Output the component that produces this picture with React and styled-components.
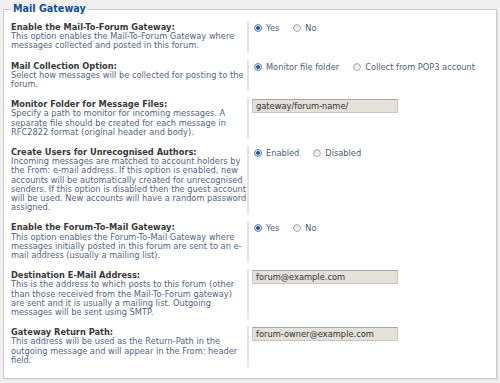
import React, { useState } from 'react'
import styled, { createGlobalStyle } from 'styled-components'

const GlobalStyle = createGlobalStyle`
    html, body {
        margin: 0;
        padding: 0;
        background: #efefef;
    }
    body {
        font-family: "DejaVu Sans", Verdana, sans-serif;
        font-size: 8.25px;
    }
`

const Page = styled.div`
    padding: 3px 3px 6px 3px;
    width: 494px;
`

const Fieldset = styled.fieldset`
    margin: 0;
    padding: 6px 6px 6px 7px;
    border: 1px solid #cdcdcd;
    background: #fff;
    box-shadow: 1px 1px 0 #e2e2e2;
`

const Legend = styled.legend`
    margin-left: 1px;
    padding: 0 1px;
    font-size: 9.6px;
    font-weight: bold;
    line-height: 12px;
    color: #115098;
`

const Row = styled.dl`
    display: flex;
    margin: 0 0 7px 0;
    &:last-child {
        margin-bottom: 5px;
    }
`

const Label = styled.dt`
    width: 236px;
    flex: none;
    margin: 0;
    padding: 2px 0;
    line-height: 9.2px;
`

const Title = styled.div`
    font-weight: bold;
    color: #383838;
`

const Explain = styled.div`
    color: #536482;
`

const Field = styled.dd`
    flex: 1;
    margin: 0;
    padding: 2px 0 0 3px;
    border-left: 2px solid #e3e3e3;
    display: flex;
    align-items: flex-start;
    gap: 12px;
`

const Option = styled.label`
    display: flex;
    align-items: center;
    gap: 4px;
    color: #4c5d77;
    line-height: 10px;
    padding-left: 2px;
`

const Radio = styled.span`
    width: 8px;
    height: 8px;
    box-sizing: border-box;
    border-radius: 50%;
    border: 1px solid ${p => (p.$on ? '#6d7f96' : '#a8adb3')};
    background: ${p => (p.$on
        ? 'radial-gradient(circle, #1a64b0 0 1.7px, #e8eef4 2.2px)'
        : 'linear-gradient(#e4e4e4, #fafafa)')};
    box-shadow: inset 0 0 1px rgba(0, 0, 0, 0.15);
`

const TextInput = styled.input`
    width: 146px;
    height: 14px;
    box-sizing: border-box;
    margin: -1px 0 0 0;
    padding: 0 3px;
    border: 1px solid #c9c5be;
    border-top-color: #aaa69f;
    background: #e4e0da;
    font-family: "DejaVu Sans", Verdana, sans-serif;
    font-size: 8.3px;
    color: #333;
    outline: none;
`

const settings = [
    {
        title: 'Enable the Mail-To-Forum Gateway:',
        explain: 'This option enables the Mail-To-Forum Gateway where messages collected and posted in this forum.',
        options: ['Yes', 'No'],
    },
    {
        title: 'Mail Collection Option:',
        explain: 'Select how messages will be collected for posting to the forum.',
        options: ['Monitor file folder', 'Collect from POP3 account'],
    },
    {
        title: 'Monitor Folder for Message Files:',
        explain: 'Specify a path to monitor for incoming messages. A separate file should be created for each message in RFC2822 format (original header and body).',
        value: 'gateway/forum-name/',
    },
    {
        title: 'Create Users for Unrecognised Authors:',
        explain: 'Incoming messages are matched to account holders by the From: e-mail address. If this option is enabled, new accounts will be automatically created for unrecognised senders. If this option is disabled then the guest account will be used. New accounts will have a random password assigned.',
        options: ['Enabled', 'Disabled'],
    },
    {
        title: 'Enable the Forum-To-Mail Gateway:',
        explain: 'This option enables the Forum-To-Mail Gateway where messages initially posted in this forum are sent to an e-mail address (usually a mailing list).',
        options: ['Yes', 'No'],
    },
    {
        title: 'Destination E-Mail Address:',
        explain: 'This is the address to which posts to this forum (other than those received from the Mail-To-Forum gateway) are sent and it is usually a mailing list. Outgoing messages will be sent using SMTP.',
        value: 'forum@example.com',
    },
    {
        title: 'Gateway Return Path:',
        explain: 'This address will be used as the Return-Path in the outgoing message and will appear in the From: header field.',
        value: 'forum-owner@example.com',
    },
]

const RadioGroup = ({ options }) => {
    const [picked, setPicked] = useState(0)
    return options.map((opt, i) => (
        <Option key={opt} onClick={() => setPicked(i)}>
            <Radio $on={picked === i} />
            {opt}
        </Option>
    ))
}

const App = () => {
    return (
        <Page>
            <GlobalStyle />
            <Fieldset>
                <Legend>Mail Gateway</Legend>
                {settings.map(s => (
                    <Row key={s.title}>
                        <Label>
                            <Title>{s.title}</Title>
                            <Explain>{s.explain}</Explain>
                        </Label>
                        <Field>
                            {s.options
                                ? <RadioGroup options={s.options} />
                                : <TextInput defaultValue={s.value} />}
                        </Field>
                    </Row>
                ))}
            </Fieldset>
        </Page>
    )
}

export default App
